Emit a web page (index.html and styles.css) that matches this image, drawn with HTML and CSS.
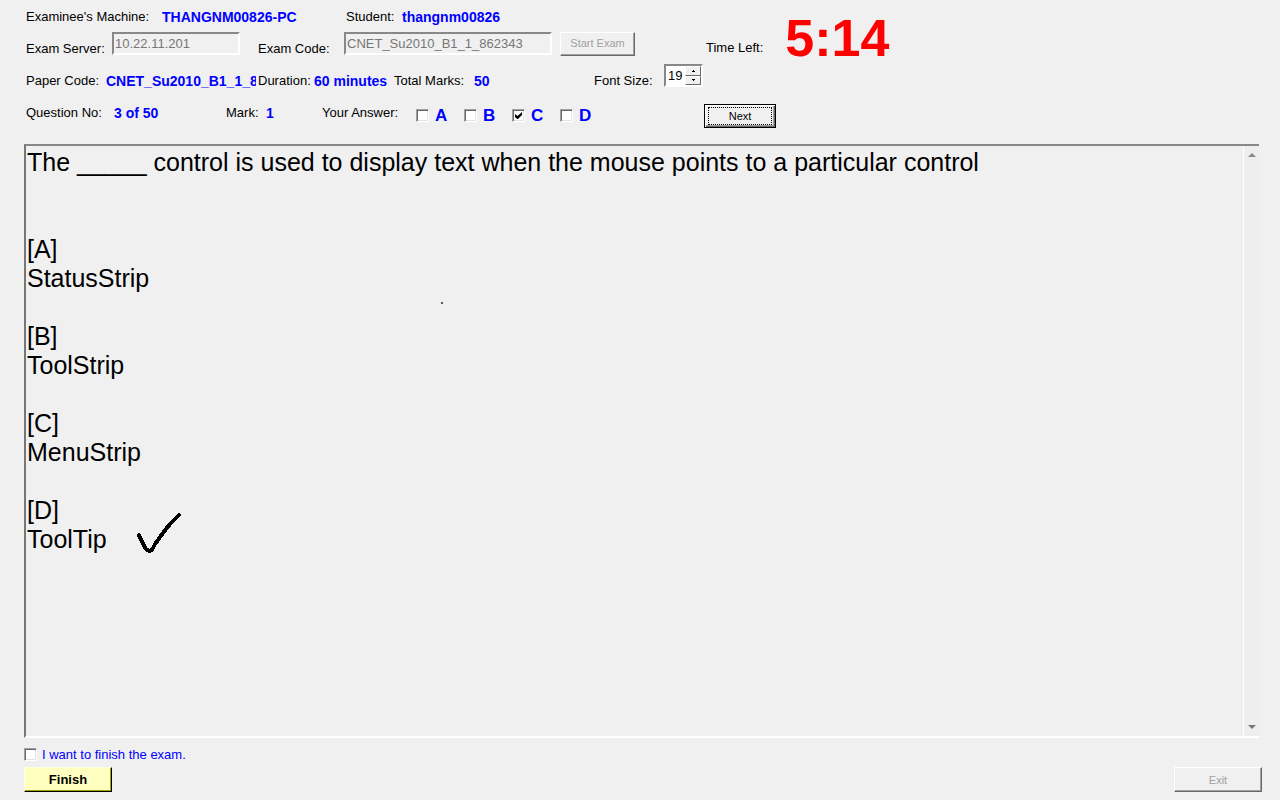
FILE: index.html
```html
<!DOCTYPE html>
<html lang="en">
<head>
<meta charset="utf-8">
<title>Exam Client</title>
<link rel="stylesheet" href="styles.css">
</head>
<body>
<form class="exam">
  <header class="header">
    <div class="details">
      <div class="row row-student">
        <span class="text">Examinee's Machine:</span><b class="text value">THANGNM00826-PC</b>
        <span class="text">Student:</span><b class="text value">thangnm00826</b>
      </div>
      <div class="row row-server">
        <label class="text" for="server">Exam Server:</label>
        <input class="field" id="server" type="text" value="10.22.11.201" disabled>
        <label class="text" for="code">Exam Code:</label>
        <input class="field" id="code" type="text" value="CNET_Su2010_B1_1_862343" disabled>
        <button class="button" type="button" disabled>Start Exam</button>
      </div>
      <div class="row row-paper">
        <span class="text">Paper Code:</span><b class="text value clipped">CNET_Su2010_B1_1_862343</b>
        <span class="text">Duration:</span><b class="text value">60 minutes</b>
        <span class="text">Total Marks:</span><b class="text value">50</b>
        <label class="text" for="size">Font Size:</label>
        <div class="spinner">
          <input class="spinner-input" id="size" type="number" value="19">
          <div class="spinner-buttons">
            <button class="spin" type="button" aria-label="Increase"><svg width="3" height="2" viewBox="0 0 3 2" shape-rendering="crispEdges"><path d="M1 0h1v1h1v1H0V1h1z"/></svg></button>
            <button class="spin" type="button" aria-label="Decrease"><svg width="3" height="2" viewBox="0 0 3 2" shape-rendering="crispEdges"><path d="M0 0h3v1H2v1H1V1H0z"/></svg></button>
          </div>
        </div>
      </div>
      <div class="row row-question">
        <span class="text">Question No:</span><b class="text value">3 of 50</b>
        <span class="text">Mark:</span><b class="text value">1</b>
        <span class="text">Your Answer:</span>
        <div class="answers">
          <label class="answer"><input class="check" type="checkbox">A</label>
          <label class="answer"><input class="check" type="checkbox">B</label>
          <label class="answer"><input class="check" type="checkbox" checked>C</label>
          <label class="answer"><input class="check" type="checkbox">D</label>
        </div>
      </div>
    </div>
    <div class="side">
      <div class="clock"><span class="clock-label">Time Left:</span><b class="clock-time">5:14</b></div>
      <button class="button next" type="button"><span class="focus">Next</span></button>
    </div>
  </header>

  <main class="paper">
    <textarea class="question" aria-label="Question" readonly>The _____ control is used to display text when the mouse points to a particular control


[A]
StatusStrip

[B]
ToolStrip

[C]
MenuStrip

[D]
ToolTip</textarea>
    <div class="scrollbar">
      <button class="scroll" type="button" aria-label="Scroll up"><svg width="8" height="4" viewBox="0 0 8 4"><path d="M4 0l4 4H0z" fill="#888"/></svg></button>
      <button class="scroll" type="button" aria-label="Scroll down"><svg width="8" height="4" viewBox="0 0 8 4"><path d="M0 0h8L4 4z" fill="#777"/></svg></button>
    </div>
    <span class="speck"></span>
    <svg class="tick" width="46" height="42" viewBox="0 0 46 42" shape-rendering="crispEdges" aria-hidden="true"><path d="M3 22l3 7 4 7 3 2 3-1 3-6 8-11 7-9 9-9" fill="none" stroke="#000" stroke-width="4" stroke-linecap="round" stroke-linejoin="round"/></svg>
  </main>

  <footer class="footer">
    <label class="confirm"><input class="check" type="checkbox">I want to finish the exam.</label>
    <div class="actions">
      <button class="button finish" type="button">Finish</button>
      <button class="button exit" type="button" disabled>Exit</button>
    </div>
  </footer>
</form>
</body>
</html>
```
FILE: styles.css
```css
* { box-sizing: border-box; }

body {
  margin: 0;
  background: #f0f0f0;
  color: #000;
  font: 13px/16px "Liberation Sans", Arial, sans-serif;
}

input, button, textarea { font: inherit; color: inherit; }

.exam {
  display: flex;
  flex-direction: column;
  min-height: 100vh;
  padding: 0 18px 8px 24px;
}

/* Header */
.header { display: flex; height: 128px; margin-bottom: 16px; }
.details { width: 680px; padding-left: 2px; }

.row {
  display: grid;
  height: 32px;
  align-items: center;
  white-space: nowrap;
}
.row-student { grid-template-columns: 136px 184px 56px 1fr; }
.row-server { grid-template-columns: 86px 128px 18px 86px 208px 8px 75px; }
.row-server > :nth-child(3) { grid-column: 4; }
.row-server > :nth-child(5) { grid-column: 7; }
.row-paper { grid-template-columns: 80px 152px 56px 80px 80px 120px 70px 39px; }
.row-question { grid-template-columns: 88px 112px 40px 56px 94px 1fr; }

.text { padding-top: 2px; }
.value { color: #00f; font-size: 14px; }
.clipped { overflow: hidden; margin-right: 2px; }

.field {
  align-self: start;
  width: 100%;
  height: 23px;
  padding: 0 1px 1px;
  border: 2px solid;
  border-color: #888 #fff #fff #888;
  background: #f0f0f0;
  color: #777;
  outline: none;
}

.button {
  height: 24px;
  padding: 0;
  border: 1px solid;
  border-color: #fff #696969 #696969 #fff;
  border-radius: 0;
  box-shadow: inset -1px -1px #a0a0a0;
  background: #f0f0f0;
  font-size: 11px;
  line-height: 16px;
}
.button:disabled { color: #a0a0a0; }
.row .button { align-self: start; padding-bottom: 2px; }

.spinner {
  display: flex;
  align-self: start;
  height: 23px;
  border: 2px solid;
  border-color: #888 #fff #fff #888;
  background: #fff;
}
.spinner-input {
  flex: 1;
  min-width: 0;
  padding: 0 0 0 2px;
  border: 0;
  outline: none;
  background: transparent;
  appearance: textfield;
}
.spinner-input::-webkit-inner-spin-button { appearance: none; margin: 0; }
.spinner-buttons { display: flex; flex-direction: column; width: 16px; }
.spin {
  display: flex;
  flex: 1;
  align-items: center;
  justify-content: center;
  padding: 0;
  border: 1px solid;
  border-color: #fff #696969 #696969 #fff;
  background: #f0f0f0;
}

.answers { display: flex; align-self: end; height: 25px; }
.answer {
  display: flex;
  align-items: center;
  gap: 6px;
  width: 48px;
  color: #00f;
  font-size: 17px;
  font-weight: bold;
}

.check {
  appearance: none;
  flex: none;
  width: 13px;
  height: 13px;
  margin: 0;
  border: 1px solid;
  border-color: #a0a0a0 #fff #fff #a0a0a0;
  background: #fff;
  box-shadow: inset 1px 1px #696969, inset -1px -1px #e3e3e3;
}
.check:checked::before {
  content: "";
  display: block;
  width: 7px;
  height: 7px;
  margin: 2px;
  background: #000;
  clip-path: polygon(0 29%, 0 72%, 29% 100%, 43% 100%, 100% 43%, 100% 0, 36% 57%);
}

.side { display: flex; flex-direction: column; justify-content: space-between; }
.clock { display: flex; align-items: center; gap: 22px; height: 76px; padding-left: 2px; }
.clock-label { padding-top: 20px; }
.clock-time { color: #f00; font-size: 52px; line-height: 52px; }

.next {
  width: 72px;
  padding: 2px;
  border-color: #000;
  box-shadow: inset 1px 1px #fff, inset -1px -1px #696969, inset -2px -2px #a0a0a0;
}
.focus { display: block; margin: 0 1px; border: 1px dotted #000; }

/* Question paper */
.paper {
  position: relative;
  display: flex;
  flex: 1;
  margin-right: 3px;
  border: solid;
  border-width: 2px 0 2px 2px;
  border-color: #888 #fff #fff #777;
}
.question {
  flex: 1;
  min-width: 0;
  padding: 2px 1px;
  border: 0;
  outline: none;
  resize: none;
  overflow: hidden;
  background: transparent;
  font-size: 25px;
  line-height: 29px;
}
.scrollbar {
  display: flex;
  flex-direction: column;
  justify-content: space-between;
  width: 16px;
  border-left: 1px solid #fff;
  background: #eee;
}
.scroll {
  display: flex;
  align-items: center;
  justify-content: center;
  height: 17px;
  padding: 0;
  border: 0;
  background: transparent;
}
.speck { position: absolute; left: 415px; top: 156px; width: 2px; height: 2px; background: #555; }
.tick { position: absolute; left: 110px; top: 367px; }

/* Footer */
.footer { padding-top: 9px; }
.confirm { display: inline-flex; align-items: center; gap: 5px; height: 16px; color: #00f; }
.actions { display: flex; justify-content: space-between; margin-top: 2px; }
.actions .button { width: 88px; height: 25px; }
.actions .finish {
  border-color: #ffffe0 #000 #000 #ffffe0;
  box-shadow: inset -1px -1px #a0a000;
  background: #ffffc0;
  font-size: 13px;
  font-weight: bold;
}
```
